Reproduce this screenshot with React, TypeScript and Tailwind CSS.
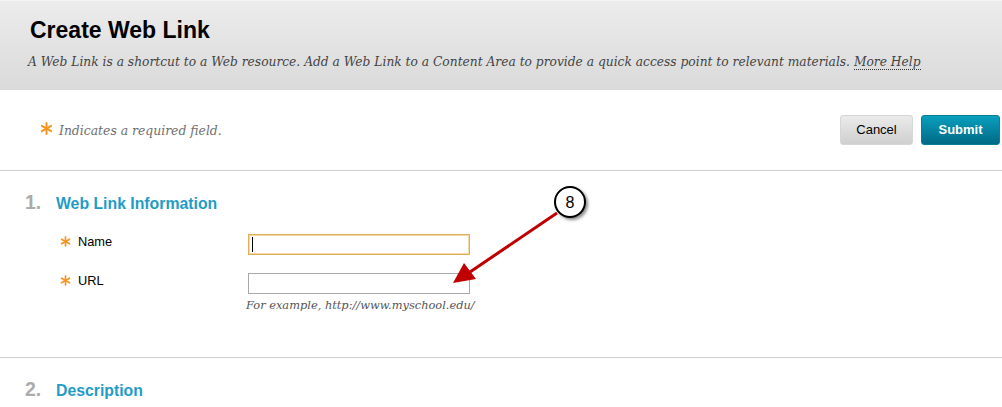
import React from "react";

const serif = "font-['DejaVu_Serif',serif]";
const sans = "font-['Liberation_Sans',Arial,sans-serif]";

function Star({ className = "" }: { className?: string }) {
  return (
    <svg viewBox="0 0 12 12" className={className}>
      <g stroke="#f7931e" strokeWidth="1.8" strokeLinecap="round">
        <line x1="6" y1="1" x2="6" y2="11" />
        <line x1="1.7" y1="3.5" x2="10.3" y2="8.5" />
        <line x1="1.7" y1="8.5" x2="10.3" y2="3.5" />
      </g>
    </svg>
  );
}

function SectionTitle({ num, title }: { num: string; title: string }) {
  return (
    <div className={`flex items-baseline ${sans}`}>
      <span className="w-[31px] text-[19.5px] font-bold text-[#ababab]">{num}</span>
      <span className="text-[15.8px] font-bold text-[#1f9cc6]">{title}</span>
    </div>
  );
}

function Field({ label, focused, hint }: { label: string; focused?: boolean; hint?: string }) {
  return (
    <div className="flex">
      <div className={`flex w-[223px] items-start pl-[35px] -mt-[2px] ${sans} text-[12.8px] text-black`}>
        <Star className="mr-[7px] mt-[4px] h-[11px] w-[11px]" />
        {label}
      </div>
      <div className="flex flex-col">
        <div
          className={`h-[21px] w-[222px] border ${
            focused ? "border-[#dfae5a] shadow-[inset_0_0_0_1px_#f3d9a8]" : "border-[#a9a9a9]"
          } bg-white pl-[3px] pt-[2px]`}
        >
          {focused && <div className="h-[15px] w-px bg-black" />}
        </div>
        {hint && (
          <div className={`mt-[3px] -ml-[2px] ${serif} text-[11.4px] italic text-[#555]`}>{hint}</div>
        )}
      </div>
    </div>
  );
}

export default function App() {
  return (
    <div className="relative h-[407px] w-[1002px] overflow-hidden bg-white">
      <div className="h-[90px] border-t border-[#f4f4f4] bg-gradient-to-b from-[#ececec] to-[#dadada] pl-[30px] pt-[16px]">
        <h1 className={`${sans} text-[23px] font-bold leading-[27px] text-black`}>Create Web Link</h1>
        <p className={`mt-[9px] -ml-[2px] ${serif} text-[12.25px] italic text-[#444]`}>
          A Web Link is a shortcut to a Web resource. Add a Web Link to a Content Area to provide a quick access
          point to relevant materials.{" "}
          <span className="border-b border-dotted border-[#333]">More Help</span>
        </p>
      </div>

      <div className="flex h-[81px] items-center justify-between border-b border-[#cfcfcf] pl-[40px] pr-[2px]">
        <div className="flex items-center pt-[2px]">
          <Star className="mr-[6px] mb-[6px] h-[13px] w-[13px]" />
          <span className={`${serif} text-[12.4px] italic text-[#6f6f6f]`}>Indicates a required field.</span>
        </div>
        <div className={`flex gap-[8px] ${sans} text-[13px]`}>
          <button className="h-[30px] w-[73px] rounded-[3px] border border-[#d6d6d6] bg-gradient-to-b from-[#ebebeb] to-[#cfcfcf] text-black">
            Cancel
          </button>
          <button className="h-[30px] w-[79px] rounded-[3px] border border-[#0a7d99] bg-gradient-to-b from-[#0a9fbe] to-[#006a86] font-bold text-white">
            Submit
          </button>
        </div>
      </div>

      <div className="h-[187px] border-b border-[#cfcfcf] pl-[25px] pt-[17px]">
        <SectionTitle num="1." title="Web Link Information" />
        <div className="mt-[17px] flex flex-col gap-[18px]">
          <Field label="Name" focused />
          <Field label="URL" hint="For example, http://www.myschool.edu/" />
        </div>
      </div>

      <div className="pl-[25px] pt-[17px]">
        <SectionTitle num="2." title="Description" />
      </div>

      <svg className="pointer-events-none absolute left-0 top-0" width="1002" height="407">
        <defs>
          <filter id="sh" x="-50%" y="-50%" width="200%" height="200%">
            <feDropShadow dx="2" dy="2" stdDeviation="1.8" floodColor="#000" floodOpacity="0.45" />
          </filter>
        </defs>
        <line x1="557" y1="213" x2="470" y2="272" stroke="#c00000" strokeWidth="3" />
        <polygon points="453,283 464,263 476,279" fill="#c00000" />
        <circle cx="570" cy="202" r="15" fill="#fff" stroke="#000" strokeWidth="2" filter="url(#sh)" />
        <text x="570" y="208" textAnchor="middle" fontFamily="Liberation Sans, Arial, sans-serif" fontSize="16" fill="#000">
          8
        </text>
      </svg>
    </div>
  );
}
